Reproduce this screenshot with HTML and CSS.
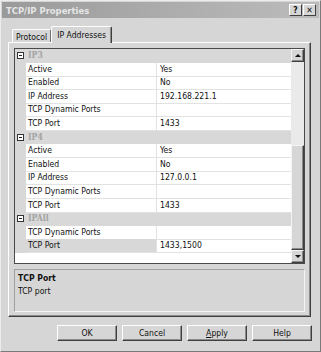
FILE: index.html
```html
<!DOCTYPE html>
<html lang="en">
  <head>
    <meta charset="UTF-8" />
    <title>TCP/IP Properties</title>
    <link rel="stylesheet" href="styles.css">
  </head>
  <body>
    <div class="dialog">
      <div class="titlebar">
        <span class="title">TCP/IP Properties</span>
        <span class="caption-btns">
          <span class="cbtn">?</span>
          <span class="cbtn">&#x2715;</span>
        </span>
      </div>

      <div class="tabs">
        <div class="tab">Protocol</div>
        <div class="tab active">IP Addresses</div>
      </div>

      <div class="panel">
        <div class="grid">
          <div class="rows">
            <div class="row cat"><span class="margin"><i class="expander"></i></span><span class="cat-name">IP3</span></div>
            <div class="row"><span class="margin"></span><span class="name">Active</span><span class="value">Yes</span></div>
            <div class="row"><span class="margin"></span><span class="name">Enabled</span><span class="value">No</span></div>
            <div class="row"><span class="margin"></span><span class="name">IP Address</span><span class="value">192.168.221.1</span></div>
            <div class="row"><span class="margin"></span><span class="name">TCP Dynamic Ports</span><span class="value"></span></div>
            <div class="row"><span class="margin"></span><span class="name">TCP Port</span><span class="value">1433</span></div>
            <div class="row cat"><span class="margin"><i class="expander"></i></span><span class="cat-name">IP4</span></div>
            <div class="row"><span class="margin"></span><span class="name">Active</span><span class="value">Yes</span></div>
            <div class="row"><span class="margin"></span><span class="name">Enabled</span><span class="value">No</span></div>
            <div class="row"><span class="margin"></span><span class="name">IP Address</span><span class="value">127.0.0.1</span></div>
            <div class="row"><span class="margin"></span><span class="name">TCP Dynamic Ports</span><span class="value"></span></div>
            <div class="row"><span class="margin"></span><span class="name">TCP Port</span><span class="value">1433</span></div>
            <div class="row cat"><span class="margin"><i class="expander"></i></span><span class="cat-name">IPAll</span></div>
            <div class="row"><span class="margin"></span><span class="name">TCP Dynamic Ports</span><span class="value"></span></div>
            <div class="row selected"><span class="margin"></span><span class="name">TCP Port</span><span class="value">1433,1500</span></div>
          </div>
          <div class="scrollbar">
            <div class="sb-btn"><i class="arrow-up"></i></div>
            <div class="sb-track">
              <div class="sb-thumb"></div>
            </div>
            <div class="sb-btn"><i class="arrow-down"></i></div>
          </div>
        </div>

        <div class="desc">
          <div class="desc-title">TCP Port</div>
          <div>TCP port</div>
        </div>
      </div>

      <div class="buttons">
        <button>OK</button>
        <button>Cancel</button>
        <button><u>A</u>pply</button>
        <button>Help</button>
      </div>
    </div>
  </body>
</html>
```

FILE: styles.css
```css
body {
  margin: 0;
  font-family: "DejaVu Sans Condensed", "DejaVu Sans", sans-serif;
  font-stretch: condensed;
  font-size: 8.6px;
  color: #111;
  background: #d6d6d6;
}

.dialog {
  width: 321px;
  height: 352px;
  box-sizing: border-box;
  background: #d6d6d6;
  border: 1px solid;
  border-color: #ececec #7a7a7a #7a7a7a #ececec;
}

.titlebar {
  margin: 1px 1px 0;
  height: 16px;
  display: flex;
  align-items: center;
  justify-content: space-between;
  padding: 0 3px 0 4px;
  background: linear-gradient(to right, #9a9a9a, #bcbcbc);
}

.title {
  color: #e6e6e6;
  font-weight: bold;
  font-size: 9.4px;
}

.caption-btns {
  display: flex;
  gap: 1px;
}

.cbtn {
  width: 11px;
  height: 10px;
  background: #d6d6d6;
  border: 1px solid;
  border-color: #fff #404040 #404040 #fff;
  font-size: 8.5px;
  font-weight: bold;
  line-height: 10px;
  text-align: center;
}

.tabs {
  display: flex;
  align-items: flex-end;
  margin: 8px 0 0 11px;
  height: 16px;
}

.tab {
  height: 13px;
  box-sizing: border-box;
  padding: 2px 3px 0 3px;
  border: 1px solid;
  border-bottom: none;
  border-color: #fff #707070 #707070 #fff;
  border-radius: 2px 2px 0 0;
}

.tab.active {
  height: 17px;
  margin-bottom: -1px;
  padding: 3px 5px 0 5px;
  position: relative;
  background: #d6d6d6;
  border-color: #fff #404040 #404040 #fff;
  box-shadow: inset -1px 0 #8a8a8a;
}

.panel {
  margin-left: 7px;
  width: 303px;
  height: 275px;
  box-sizing: border-box;
  border: 1px solid;
  border-color: #fff #404040 #404040 #fff;
  box-shadow: inset -1px -1px #8a8a8a;
  padding: 5px 5px 0 5px;
  display: flex;
  flex-direction: column;
  gap: 5px;
}

.grid {
  height: 216px;
  box-sizing: border-box;
  border: 1px solid #4a4a4a;
  display: flex;
  background: #fff;
}

.rows {
  flex: 1;
}

.row {
  display: grid;
  grid-template-columns: 11px 131px 1fr;
  height: 13.6px;
  line-height: 13px;
}

.margin {
  background: #d8d8d8;
  position: relative;
}

.name,
.value {
  padding-left: 2px;
  border-bottom: 1px solid #e2e2e2;
  white-space: nowrap;
}

.name {
  border-right: 1px solid #e2e2e2;
}

.value {
  padding-left: 3px;
}

.row.cat {
  background: #d8d8d8;
}

.cat-name {
  grid-column: 2 / 4;
  padding-left: 2px;
  color: #a4a4a4;
  font-weight: bold;
  font-family: "DejaVu Serif", serif;
  font-stretch: condensed;
}

.expander {
  position: absolute;
  left: 2px;
  top: 3px;
  width: 7px;
  height: 7px;
  box-sizing: border-box;
  border: 1px solid #333;
  background: #fff;
}

.expander::after {
  content: "";
  position: absolute;
  left: 1px;
  right: 1px;
  top: 2px;
  height: 1px;
  background: #222;
}

.row.selected .name {
  background: #d8d8d8;
}

.scrollbar {
  width: 13px;
  display: flex;
  flex-direction: column;
}

.sb-btn,
.sb-thumb {
  box-sizing: border-box;
  background: #d6d6d6;
  border: 1px solid;
  border-color: #f4f4f4 #404040 #404040 #f4f4f4;
  box-shadow: inset -1px -1px #8a8a8a;
}

.sb-btn {
  height: 13px;
  display: flex;
  align-items: center;
  justify-content: center;
}

.arrow-up,
.arrow-down {
  width: 0;
  height: 0;
  border-left: 3px solid transparent;
  border-right: 3px solid transparent;
}

.arrow-up {
  border-bottom: 3px solid #111;
}

.arrow-down {
  border-top: 3px solid #111;
}

.sb-track {
  flex: 1;
  display: flex;
  flex-direction: column;
  justify-content: flex-end;
  background: #eaeaea;
}

.sb-thumb {
  height: 105px;
}

.desc {
  height: 43px;
  box-sizing: border-box;
  border: 1px solid;
  border-color: #a0a0a0 #f4f4f4 #f4f4f4 #a0a0a0;
  padding: 2px 3px;
  line-height: 13px;
}

.desc-title {
  font-weight: bold;
}

.buttons {
  display: flex;
  justify-content: flex-end;
  gap: 5px;
  margin: 8px 8px 0 0;
}

.buttons button {
  width: 60px;
  height: 16px;
  padding: 0;
  font: inherit;
  color: #111;
  background: #d6d6d6;
  border: 1px solid;
  border-color: #fff #404040 #404040 #fff;
  box-shadow: inset -1px -1px #8a8a8a;
}
```
